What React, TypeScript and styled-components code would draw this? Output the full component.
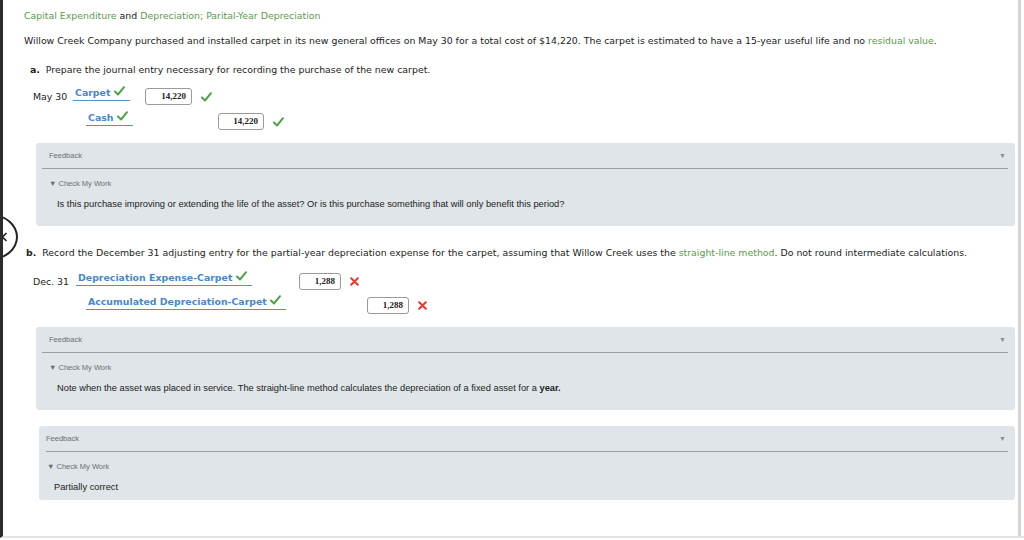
import React from 'react';
import styled, { createGlobalStyle } from 'styled-components';

const GlobalStyle = createGlobalStyle`
  html, body {
    margin: 0;
    padding: 0;
    background: #ffffff;
  }
  body {
    font-family: 'DejaVu Sans', Verdana, sans-serif;
    color: #222;
  }
`;

const Frame = styled.div`
  position: relative;
  width: 1024px;
  height: 538px;
  box-sizing: border-box;
  border-left: 3px solid #2b2b2b;
  border-bottom: 2px solid #e4e4e4;
  display: flex;
  overflow: hidden;
`;

const Content = styled.div`
  flex: 1;
  padding: 10px 3px 0 21px;
  font-size: 9.4px;
  line-height: 12px;
`;

const ScrollBar = styled.div`
  width: 3px;
  margin-right: 3px;
  background: #d6d6d6;
`;

const NavCircle = styled.div`
  position: absolute;
  left: -39px;
  top: 214px;
  width: 42px;
  height: 42px;
  border: 2.5px solid #222;
  border-radius: 50%;
  background: #fff;
  display: flex;
  align-items: center;
  justify-content: flex-end;
  padding-right: 8px;
  box-sizing: content-box;
`;

const Title = styled.div`
  color: #222;
`;

const Green = styled.span`
  color: #5c9a4b;
`;

const Intro = styled.p`
  margin: 13px 0 0;
`;

const Part = styled.p<{ $indent?: number; $top?: number }>`
  margin: ${p => p.$top || 17}px 0 0 ${p => p.$indent || 6}px;
`;

const Letter = styled.b`
  margin-right: 3px;
`;

const Journal = styled.div<{ $top: number; $gap: number }>`
  margin: ${p => p.$top}px 0 0 9px;
  display: flex;
  flex-direction: column;
  gap: ${p => p.$gap}px;
`;

const Row = styled.div`
  display: flex;
  align-items: center;
  height: 17px;
`;

const DateCell = styled.div<{ $w: number }>`
  width: ${p => p.$w}px;
  flex: none;
  padding-top: 1px;
`;

const AccountCell = styled.div<{ $w: number; $indent?: number }>`
  width: ${p => p.$w}px;
  flex: none;
  box-sizing: border-box;
  padding-left: ${p => p.$indent || 0}px;
  align-self: flex-start;
  margin-top: -2px;
`;

const Account = styled.span`
  display: inline-block;
  color: #4d86c4;
  font-weight: bold;
  border-bottom: 1.5px solid #5b8fc7;
  padding: 0 5px 1px 2px;
  line-height: 12px;
  white-space: nowrap;
`;

const AmountCell = styled.div<{ $w: number }>`
  width: ${p => p.$w}px;
  flex: none;
  display: flex;
  align-items: center;
`;

const AmountBox = styled.div<{ $w: number }>`
  width: ${p => p.$w}px;
  height: 17px;
  box-sizing: border-box;
  border: 1px solid #9a9a9a;
  border-radius: 3px;
  background: #fff;
  font-family: 'Liberation Serif', 'Times New Roman', serif;
  font-weight: bold;
  font-size: 9px;
  text-align: right;
  line-height: 15px;
  padding-right: 5px;
  color: #222;
`;

const Mark = styled.span`
  display: inline-flex;
  margin-left: 9px;
`;

const Panel = styled.div<{ $top: number; $left: number; $h: number; $compact?: boolean }>`
  margin: ${p => p.$top}px 0 0 ${p => p.$left}px;
  height: ${p => p.$h}px;
  background: #dfe5e8;
  border-radius: 3px;
  padding: 7px 7px 0 ${p => (p.$compact ? 7 : 6)}px;
  box-sizing: border-box;
  font-family: 'Liberation Sans', Arial, sans-serif;
`;

const PanelHead = styled.div<{ $compact?: boolean }>`
  display: flex;
  justify-content: space-between;
  padding: 0 0 6px ${p => (p.$compact ? 0 : 7)}px;
  border-bottom: 1.5px solid #9aa0a3;
  font-size: 7.5px;
  color: #6a6f72;
  line-height: 12px;
`;

const Caret = styled.span`
  font-size: 7px;
  color: #8c8f91;
  padding-right: 2px;
`;

const CheckWork = styled.div<{ $compact?: boolean }>`
  margin: 9px 0 0 ${p => (p.$compact ? 1 : 7)}px;
  font-size: 7.5px;
  color: #6a6f72;
  line-height: 12px;
`;

const FeedbackText = styled.div<{ $compact?: boolean }>`
  margin: 8px 0 0 ${p => (p.$compact ? 8 : 15)}px;
  font-size: 9.3px;
  color: #222;
  line-height: 12px;
`;

const Check = () => (
  <svg width="11" height="10" viewBox="0 0 11 10">
    <path d="M1 5.5 L4 8.5 L10 1.2" fill="none" stroke="#4fa14a" strokeWidth="2" strokeLinecap="round" strokeLinejoin="round" />
  </svg>
);

const Cross = () => (
  <svg width="9" height="9" viewBox="0 0 9 9">
    <path d="M1.2 1.2 L7.8 7.8 M7.8 1.2 L1.2 7.8" stroke="#e8372f" strokeWidth="2" strokeLinecap="round" />
  </svg>
);

const Chevron = () => (
  <svg width="7" height="10" viewBox="0 0 7 10">
    <path d="M5.5 1 L1.5 5 L5.5 9" fill="none" stroke="#222" strokeWidth="1.6" />
  </svg>
);

interface FeedbackProps {
  top: number;
  left: number;
  h: number;
  compact?: boolean;
  children: React.ReactNode;
}

const Feedback: React.FC<FeedbackProps> = ({ top, left, h, compact, children }) => (
  <Panel $top={top} $left={left} $h={h} $compact={compact}>
    <PanelHead $compact={compact}>
      <span>Feedback</span>
      <Caret>▼</Caret>
    </PanelHead>
    <CheckWork $compact={compact}>▼ Check My Work</CheckWork>
    <FeedbackText $compact={compact}>{children}</FeedbackText>
  </Panel>
);

const AccountLabel: React.FC<{ name: string }> = ({ name }) => (
  <Account>
    {name} <Check />
  </Account>
);

export default function App() {
  return (
    <>
      <GlobalStyle />
      <Frame>
        <NavCircle>
          <Chevron />
        </NavCircle>
        <Content>
          <Title>
            <Green>Capital Expenditure</Green> and <Green>Depreciation; Parital-Year Depreciation</Green>
          </Title>
          <Intro>
            Willow Creek Company purchased and installed carpet in its new general offices on May 30 for a total cost of $14,220. The carpet is estimated to have a 15-year useful life and no <Green>residual value</Green>.
          </Intro>

          <Part>
            <Letter>a.</Letter> Prepare the journal entry necessary for recording the purchase of the new carpet.
          </Part>
          <Journal $top={12} $gap={8}>
            <Row>
              <DateCell $w={40}>May 30</DateCell>
              <AccountCell $w={72}>
                <AccountLabel name="Carpet" />
              </AccountCell>
              <AmountCell $w={73}>
                <AmountBox $w={47}>14,220</AmountBox>
                <Mark><Check /></Mark>
              </AmountCell>
            </Row>
            <Row>
              <DateCell $w={40} />
              <AccountCell $w={72} $indent={13}>
                <AccountLabel name="Cash" />
              </AccountCell>
              <AmountCell $w={73} />
              <AmountCell $w={80}>
                <AmountBox $w={46}>14,220</AmountBox>
                <Mark><Check /></Mark>
              </AmountCell>
            </Row>
          </Journal>

          <Feedback top={13} left={12} h={83}>
            Is this purchase improving or extending the life of the asset? Or is this purchase something that will only benefit this period?
          </Feedback>

          <Part $indent={2} $top={21}>
            <Letter>b.</Letter> Record the December 31 adjusting entry for the partial-year depreciation expense for the carpet, assuming that Willow Creek uses the <Green>straight-line method</Green>. Do not round intermediate calculations.
          </Part>
          <Journal $top={14} $gap={7}>
            <Row>
              <DateCell $w={43}>Dec. 31</DateCell>
              <AccountCell $w={223}>
                <AccountLabel name="Depreciation Expense-Carpet" />
              </AccountCell>
              <AmountCell $w={68}>
                <AmountBox $w={42}>1,288</AmountBox>
                <Mark><Cross /></Mark>
              </AmountCell>
            </Row>
            <Row>
              <DateCell $w={43} />
              <AccountCell $w={223} $indent={10}>
                <AccountLabel name="Accumulated Depreciation-Carpet" />
              </AccountCell>
              <AmountCell $w={68} />
              <AmountCell $w={80}>
                <AmountBox $w={42}>1,288</AmountBox>
                <Mark><Cross /></Mark>
              </AmountCell>
            </Row>
          </Journal>

          <Feedback top={13} left={12} h={83}>
            Note when the asset was placed in service. The straight-line method calculates the depreciation of a fixed asset for a <b>year.</b>
          </Feedback>

          <Feedback top={16} left={15} h={74} compact>
            Partially correct
          </Feedback>
        </Content>
        <ScrollBar />
      </Frame>
    </>
  );
}
